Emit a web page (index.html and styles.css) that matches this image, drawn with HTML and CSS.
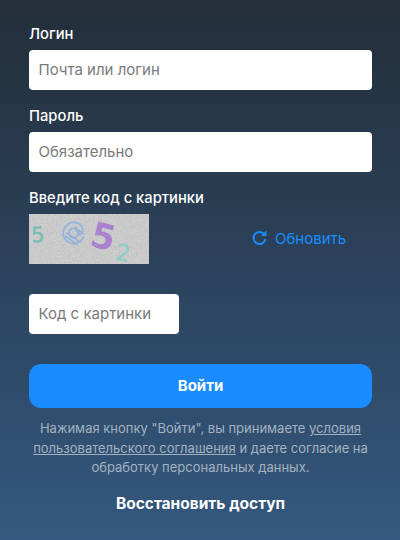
FILE: index.html
```html
<!DOCTYPE html>
<html lang="ru">
<head>
<meta charset="utf-8">
<title>Вход</title>
<link rel="stylesheet" href="styles.css">
</head>
<body>
<form class="form">
  <div class="field">
    <label class="label">Логин</label>
    <input class="input" type="text" placeholder="Почта или логин">
  </div>
  <div class="field">
    <label class="label">Пароль</label>
    <input class="input" type="text" placeholder="Обязательно">
  </div>
  <div class="field captcha-field">
    <label class="label">Введите код с картинки</label>
    <div class="captcha-row">
      <svg class="captcha" width="120" height="50" viewBox="0 0 120 50">
        <defs>
          <filter id="noise" x="0" y="0" width="100%" height="100%">
            <feTurbulence type="fractalNoise" baseFrequency="1.2" numOctaves="2" seed="4"/>
            <feColorMatrix type="matrix" values="0 0 0 0 0.45  0 0 0 0 0.45  0 0 0 0 0.45  2.6 0 0 0 -0.95"/>
          </filter>
          <filter id="soft"><feGaussianBlur stdDeviation="0.4"/></filter>
        </defs>
        <rect width="120" height="50" fill="#cfcfcf"/>
        <g filter="url(#soft)">
          <text class="d d1" x="2.5" y="28" transform="rotate(-4 9 20)">5</text>
          <g transform="rotate(-32 44 18)">
            <text class="d d2" x="31" y="26">@</text>
          </g>
          <path class="d2-lines" d="M36 22l13 9M37 18.500l15 10M46 14l9 6"/>
          <text class="d d3" x="62" y="35" transform="rotate(14 75 23)">5</text>
          <text class="d d4" x="87" y="47" transform="rotate(12 94 39)">2</text>
        </g>
        <rect width="120" height="50" filter="url(#noise)" opacity="0.5"/>
      </svg>
      <a class="refresh" href="#">
        <svg class="refresh-icon" width="15" height="15" viewBox="0 0 15 15">
          <path d="M12.4 4.4A6 6 0 1 0 13.5 9" fill="none" stroke="currentColor" stroke-width="2"/>
          <path d="M14.5 .5v5.600H8.900z" fill="currentColor"/>
        </svg>
        <span class="refresh-text">Обновить</span>
      </a>
    </div>
    <input class="input input-short" type="text" placeholder="Код с картинки">
  </div>
  <button class="submit" type="button">Войти</button>
  <p class="terms">Нажимая кнопку "Войти", вы принимаете <a href="#">условия пользовательского соглашения</a> и даете согласие на обработку персональных данных.</p>
  <a class="restore" href="#">Восстановить доступ</a>
</form>
</body>
</html>
```
FILE: styles.css
```css
* { box-sizing: border-box; }
html, body { height: 100%; }
body {
  margin: 0;
  height: 540px;
  overflow: hidden;
  background: linear-gradient(180deg, #232e39 0%, #34587f 100%);
  font-family: Inter, "Noto Sans", sans-serif;
  color: #fff;
}
.form {
  display: flex;
  flex-direction: column;
  padding: 25px 28px 0 29px;
}
.field { display: flex; flex-direction: column; margin-bottom: 17px; }
.label {
  font-size: 14.750px;
  line-height: 18px;
  font-weight: 500;
  margin-bottom: 7px;
}
.input {
  width: 100%;
  height: 40px;
  border: 0;
  border-radius: 4px;
  background: #fff;
  padding: 0 9.500px 2px;
  font: 400 15px Inter, sans-serif;
  outline: 0;
}
.input::placeholder { color: #7a7a7a; opacity: 1; }
.input-short { width: 150px; }
.captcha-field { margin-bottom: 30px; }
.captcha-row { display: flex; align-items: center; margin-bottom: 30px; height: 50px; }
.captcha { display: block; flex: none; }
.d { font-family: "DejaVu Sans", sans-serif; }
.d1 { font-size: 21px; fill: #6cc0b8; stroke: #6cc0b8; stroke-width: 0.5; }
.d2 { font-size: 26px; fill: #8fb4e4; }
.d2-lines { fill: none; stroke: #8fb4e4; stroke-width: 1.6; }
.d3 { font-size: 35px; font-weight: 700; fill: #a878d6; }
.d4 { font-size: 23px; fill: #8cd0cc; stroke: #8cd0cc; stroke-width: 0.4; }
.refresh {
  margin-left: 103px;
  display: flex;
  align-items: center;
  gap: 8px;
  color: #1a8cff;
  font-size: 15px;
  line-height: 18px;
  text-decoration: none;
}
.refresh-icon { flex: none; margin-bottom: 3px; }
.refresh-text { margin-bottom: 1px; }
.submit {
  height: 44px;
  border: 0;
  border-radius: 12px;
  background: #1a8cff;
  color: #fff;
  padding: 0 0 2px;
  font: 700 15px Inter, sans-serif;
}
.terms {
  margin: 11px 0 0;
  text-align: center;
  font-size: 13px;
  line-height: 19.500px;
  color: #a4b1c0;
}
.terms a { color: inherit; }
.restore {
  margin-top: 16px;
  text-align: center;
  color: #fff;
  font-size: 15.500px;
  line-height: 19px;
  font-weight: 700;
  text-decoration: none;
}
```
